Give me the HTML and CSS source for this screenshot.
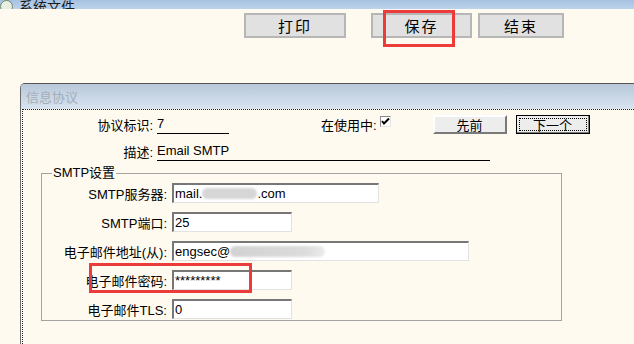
FILE: index.html
```html
<!DOCTYPE html>
<html lang="zh">
<head>
  <meta charset="UTF-8">
  <title>系统文件</title>
  <link rel="stylesheet" href="styles.css">
</head>
<body>
  <div class="titlebar">
    <span class="app-icon"></span>
    <span class="title">系统文件</span>
  </div>

  <div class="toolbar">
    <button class="tool-btn print">打印</button>
    <button class="tool-btn save">保存</button>
    <button class="tool-btn finish">结束</button>
  </div>

  <div class="panel">
    <div class="panel-head">信息协议</div>
    <div class="panel-body">
      <div class="row row-id">
        <span class="label">协议标识:</span>
        <span class="value value-id">7</span>
        <span class="inuse">在使用中:</span>
        <span class="check">
          <svg width="9" height="9" viewBox="0 0 9 9"><path d="M1 4 L3 6.5 L8 1.5" fill="none" stroke="#000" stroke-width="2"/></svg>
        </span>
        <button class="nav-btn prev">先前</button>
        <button class="nav-btn next"><span>下一个</span></button>
      </div>

      <div class="row row-desc">
        <span class="label">描述:</span>
        <span class="value value-desc">Email SMTP</span>
      </div>

      <fieldset class="smtp">
        <legend>SMTP设置</legend>
        <div class="field">
          <label>SMTP服务器:</label>
          <div class="input w-server">mail.<span class="blur blur-host"></span>.com</div>
        </div>
        <div class="field">
          <label>SMTP端口:</label>
          <div class="input w-small">25</div>
        </div>
        <div class="field">
          <label>电子邮件地址(从):</label>
          <div class="input w-mail">engsec@<span class="blur blur-mail"></span></div>
        </div>
        <div class="field">
          <label>电子邮件密码:</label>
          <div class="input w-small">*********</div>
        </div>
        <div class="field">
          <label>电子邮件TLS:</label>
          <div class="input w-small">0</div>
        </div>
      </fieldset>
    </div>
  </div>

  <div class="mark mark-save"></div>
  <div class="mark mark-pass"></div>
</body>
</html>
```

FILE: styles.css
```css
body {
  margin: 0;
  background-color: #fffaef;
  font-family: 'Liberation Sans', 'Noto Sans CJK SC', sans-serif;
  font-size: 13px;
  color: #000;
  overflow: hidden;
  position: relative;
  height: 344px;
}

.titlebar {
  height: 9px;
  display: flex;
  align-items: flex-end;
  overflow: hidden;
  background: linear-gradient(#a6c1e0, #bdd3ec);
}

.app-icon {
  width: 11px;
  height: 11px;
  margin-bottom: -4px;
  border-radius: 50%;
  border: 1px solid #6a8a6a;
  background: #e8efe0;
  flex: none;
}

.title {
  margin-left: 6px;
  margin-bottom: -5px;
  font-size: 14px;
  line-height: 14px;
  color: #1a1a1a;
}

.toolbar {
  display: flex;
  padding-top: 4px;
  padding-left: 244px;
}

.tool-btn {
  height: 25px;
  padding: 0;
  border: 2px solid #b6b6b6;
  background-color: #e1e1e1;
  font-family: 'Noto Sans CJK SC', sans-serif;
  font-size: 15px;
  letter-spacing: 2px;
  color: #000;
}

.tool-btn.print { width: 102px; }
.tool-btn.save { width: 101px; margin-left: 25px; }
.tool-btn.finish { width: 86px; margin-left: 6px; }

.panel {
  margin-top: 45px;
  margin-left: 20px;
  border-top: 1px solid #555;
  border-left: 1px solid #6c6c6c;
  border-top-left-radius: 5px;
}

.panel-head {
  height: 25px;
  line-height: 25px;
  padding-left: 5px;
  background: linear-gradient(#b8c8d9, #d8e4f1);
  color: #a4adb8;
  font-family: 'Noto Sans CJK SC', sans-serif;
  font-size: 13px;
  border-top-left-radius: 4px;
}

.panel-body {
  margin-left: 1px;
  border-top: 1px dotted #222;
  border-left: 1px dotted #222;
  height: 234px;
}

.row {
  display: flex;
  align-items: center;
  height: 20px;
}

.row-id { margin-top: 4px; }
.row-desc { margin-top: 7px; }

.label {
  width: 130px;
  text-align: right;
  flex: none;
}

.value {
  margin-left: 4px;
  height: 19px;
  line-height: 19px;
  border-bottom: 1px solid #000;
}

.value-id { width: 72px; }
.value-desc { width: 333px; }

.inuse {
  margin-left: 92px;
}

.check {
  align-self: flex-start;
  margin-top: 2px;
  margin-left: 3px;
  width: 9px;
  height: 9px;
  border-top: 1px solid #8a8a8a;
  border-left: 1px solid #8a8a8a;
  border-bottom: 1px solid #e6e6e6;
  border-right: 1px solid #e6e6e6;
  background: #fff;
  display: flex;
}

.nav-btn {
  width: 74px;
  height: 19px;
  padding: 0;
  background-color: #ededed;
  border: 2px solid;
  border-color: #fff #7a7a7a #7a7a7a #fff;
  font-family: 'Noto Sans CJK SC', sans-serif;
  font-size: 13px;
  line-height: 13px;
  color: #000;
}

.nav-btn.prev { margin-left: 42px; }

.nav-btn.next {
  margin-left: 9px;
  border: 1px solid #000;
  box-shadow: inset -1px -1px 0 #7a7a7a;
  padding: 2px;
}

.nav-btn.next span {
  display: block;
  height: 11px;
  line-height: 11px;
  border: 1px dotted #000;
}

.smtp {
  margin: 4px 0 0 18px;
  padding: 0 0 1px 0;
  width: 519px;
  border: 1px solid #a3a3a3;
}

.smtp legend {
  margin-left: 10px;
  padding: 0 1px;
  line-height: 16px;
}

.field {
  display: flex;
  align-items: center;
  height: 20px;
  margin-top: 9px;
}

.field:first-of-type { margin-top: 2px; }

.field label {
  width: 125px;
  margin-right: 5px;
  text-align: right;
  flex: none;
}

.input {
  box-sizing: border-box;
  height: 20px;
  line-height: 17px;
  padding-left: 1px;
  background: #fff;
  border-top: 2px solid #777;
  border-left: 2px solid #777;
  border-bottom: 1px solid #e2e2e2;
  border-right: 1px solid #e2e2e2;
  display: flex;
  align-items: center;
  white-space: nowrap;
  overflow: hidden;
}

.w-server { width: 207px; }
.w-small { width: 120px; }
.w-mail { width: 297px; }

.blur {
  display: inline-block;
  height: 11px;
  background: #d6d6d6;
  border-radius: 6px;
  filter: blur(1px);
}

.blur-host { width: 55px; }

.blur-mail {
  width: 95px;
  background: linear-gradient(90deg, #d2d2d2, #dcdcdc 80%, #ececec);
}

.mark {
  position: absolute;
  border: 3px solid #ec3b3b;
  box-sizing: border-box;
}

.mark-save {
  left: 383px;
  top: 10px;
  width: 72px;
  height: 37px;
}

.mark-pass {
  left: 89px;
  top: 263px;
  width: 163px;
  height: 30px;
}
```
